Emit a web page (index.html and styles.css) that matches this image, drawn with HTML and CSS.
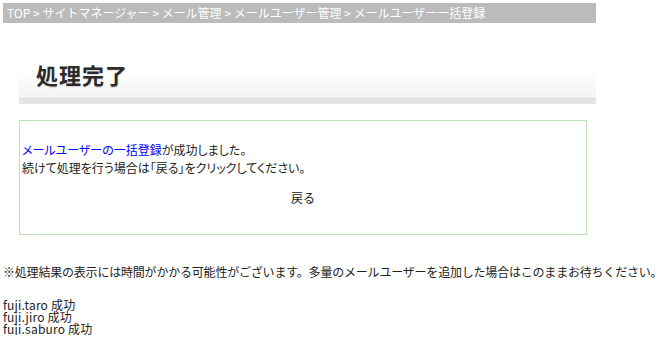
FILE: index.html
```html
<!DOCTYPE html>
<html lang="ja">
<head>
<meta charset="utf-8">
<title>処理完了</title>
<link rel="stylesheet" href="styles.css">
</head>
<body>
<div class="breadcrumb">TOP &gt; サイトマネージャー &gt; メール管理 &gt; メールユーザー管理 &gt; メールユーザー一括登録</div>
<div class="page-head"><h1 class="page-title">処理完了</h1></div>
<div class="result-box">
  <p class="msg"><a class="msg-link" href="#">メールユーザーの一括登録</a>が成功しました。<br>続けて処理を行う場合は「戻る」をクリックしてください。</p>
  <div class="back-row"><a class="back-link" href="#">戻る</a></div>
</div>
<p class="note">※処理結果の表示には時間がかかる可能性がございます。多量のメールユーザーを追加した場合はこのままお待ちください。</p>
<div class="results">
  <div class="result-line">fuji.taro 成功</div>
  <div class="result-line">fuji.jiro 成功</div>
  <div class="result-line">fuji.saburo 成功</div>
</div>
</body>
</html>
```

FILE: styles.css
```css
html, body {
  margin: 0;
  padding: 0;
  background: #fff;
}
body {
  font-family: "Noto Sans CJK JP", "Noto Sans", sans-serif;
  font-size: 12px;
  color: #222;
}
.breadcrumb {
  margin: 3px 0 0 3px;
  width: 589px;
  height: 20px;
  line-height: 20px;
  padding-left: 4px;
  background: #bbbbbb;
  color: #fff;
  font-size: 12px;
  white-space: nowrap;
  overflow: hidden;
}
.page-head {
  margin: 20px 0 0 19px;
  width: 560px;
  padding: 16px 0 10px 17px;
  background: linear-gradient(to bottom, #ffffff 0%, #ffffff 50%, #f1f1f1 100%);
  border-bottom: 5px solid #e6e6e6;
  box-shadow: inset 0 -1px 0 #dcdcdc;
}
.page-title {
  margin: 0;
  font-size: 22px;
  line-height: 30px;
  font-weight: bold;
  color: #2b2b2b;
  letter-spacing: 1px;
  text-shadow: 0 1px 1px rgba(0,0,0,0.15);
}
.result-box {
  margin: 16px 0 0 19px;
  width: 562px;
  border: 1px solid #b9e2b9;
  padding: 20px 2px 27px 2px;
}
.msg {
  margin: 0;
  line-height: 18px;
  font-feature-settings: "palt";
}
.msg-link {
  color: #0000ff;
  text-decoration: none;
}
.back-row {
  margin-top: 12px;
  line-height: 18px;
  text-align: center;
}
.back-link {
  color: #222;
  text-decoration: none;
}
.note {
  margin: 29px 0 0 3px;
  line-height: 16px;
  white-space: nowrap;
  letter-spacing: -0.2px;
}
.results {
  margin: 19px 0 0 3px;
}
.result-line {
  height: 12px;
  line-height: 12px;
  font-size: 12px;
  letter-spacing: 0.2px;
}
```
